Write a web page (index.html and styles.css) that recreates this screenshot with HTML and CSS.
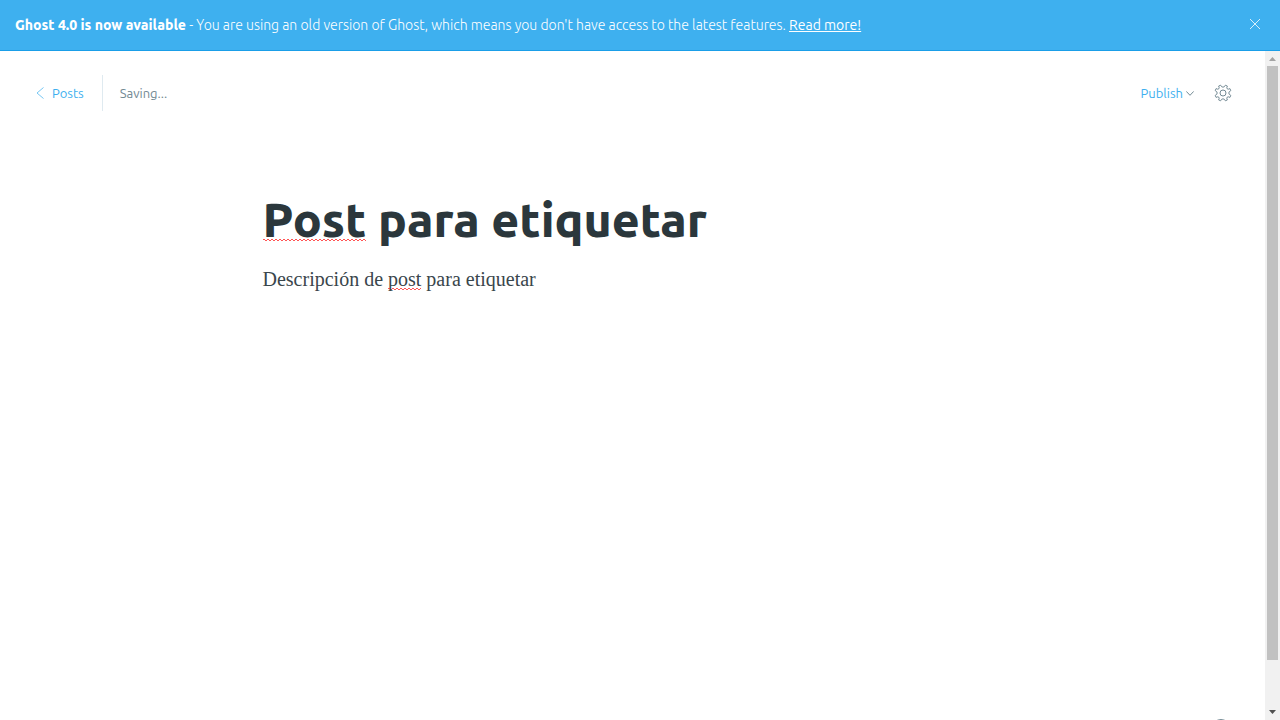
FILE: index.html
```html
<!DOCTYPE html>
<html lang="en">
<head>
<meta charset="utf-8">
<meta name="viewport" content="width=device-width, initial-scale=1">
<title>Post para etiquetar - Ghost</title>
<link rel="stylesheet" href="styles.css">
</head>
<body>
<aside class="alert">
  <div class="alert-text"><b>Ghost 4.0 is now available</b> - You are using an old version of Ghost, which means you don't have access to the latest features. <a href="#">Read more!</a></div>
  <button class="icon-button alert-close" type="button" aria-label="Close">
    <svg width="10" height="10" viewBox="0 0 10 10"><path d="M0 0L10 10M10 0L0 10"/></svg>
  </button>
</aside>
<div class="viewport">
  <main class="editor">
    <header class="editor-header">
      <a class="back" href="#">
        <svg width="8" height="12" viewBox="0 0 8 12"><path d="M7.500 .5L1 6L7.500 11.500"/></svg>
        <span>Posts</span>
      </a>
      <span class="status">Saving...</span>
      <button class="publish" type="button">
        <span>Publish</span>
        <svg width="8" height="5" viewBox="0 0 8 5"><path d="M.3 .4L4 4.300L7.700 .4"/></svg>
      </button>
      <button class="icon-button settings" type="button" aria-label="Settings">
        <svg width="18" height="18" viewBox="0 0 18 18"><circle cx="9" cy="9" r="3"/><path d="M6.600 1.200Q7.500 3.200 9 3.200Q10.500 3.200 11.400 1.200L13.400 2.100Q12.300 3.900 13.200 4.800Q14.100 5.700 15.900 4.600L16.800 6.600Q14.800 7.500 14.800 9Q14.800 10.500 16.800 11.400L15.900 13.400Q14.100 12.300 13.200 13.200Q12.300 14.100 13.400 15.900L11.400 16.800Q10.500 14.800 9 14.800Q7.500 14.800 6.600 16.800L4.600 15.900Q5.700 14.100 4.800 13.200Q3.900 12.300 2.100 13.400L1.200 11.400Q3.200 10.500 3.200 9Q3.200 7.500 1.200 6.600L2.100 4.600Q3.900 5.700 4.800 4.800Q5.700 3.900 4.600 2.100Z"/></svg>
      </button>
    </header>
    <article class="post">
      <h1 class="post-title" contenteditable="true" spellcheck="false"><span class="misspelled">Post</span> para etiquetar</h1>
      <p class="post-body" contenteditable="true" spellcheck="false">Descripción de <span class="misspelled">post</span> para etiquetar</p>
    </article>
    <button class="icon-button help" type="button" aria-label="Help">
      <svg width="18" height="18" viewBox="0 0 18 18"><circle cx="9" cy="9" r="8.500"/></svg>
    </button>
  </main>
  <div class="scrollbar" aria-hidden="true">
    <svg class="arrow-up" width="9" height="4" viewBox="0 0 9 4"><path d="M1 4L4.500 0L8 4Z"/></svg>
    <div class="track"><div class="thumb"></div></div>
    <svg class="arrow-down" width="9" height="4" viewBox="0 0 9 4"><path d="M1 0L4.500 4L8 0Z"/></svg>
  </div>
</div>
</body>
</html>
```
FILE: styles.css
```css
* {
  box-sizing: border-box;
}

body {
  display: flex;
  flex-direction: column;
  height: 100vh;
  margin: 0;
  overflow: hidden;
  background: #fff;
  color: #2b373c;
  font: 13px/20px Ubuntu, "Open Sans", "Noto Sans", sans-serif;
}

svg {
  display: block;
  fill: none;
  stroke: currentColor;
}

button {
  border: 0;
  padding: 0;
  background: none;
  color: inherit;
  font: inherit;
  cursor: pointer;
}

.alert {
  display: flex;
  flex: none;
  align-items: center;
  justify-content: space-between;
  padding: 15px 20px 15px 15px;
  border-bottom: 1px solid #1a9ee8;
  background: #3eb0ef;
  color: #fff;
  font-size: 14px;
  font-weight: 300;
}

.alert b {
  font-weight: 800;
}

.alert a {
  color: inherit;
  font-weight: 400;
  text-underline-offset: 1px;
}

.alert-close {
  padding-bottom: 2px;
}

.alert-close svg {
  opacity: 0.8;
}

.viewport {
  display: flex;
  flex: 1;
  min-height: 0;
}

.editor {
  position: relative;
  flex: 1;
  min-width: 0;
  overflow: hidden;
}

.editor-header {
  display: flex;
  align-items: center;
  padding: 24px 33px 0 36px;
}

.back {
  display: flex;
  align-items: center;
  gap: 8px;
  padding: 8px 18px 8px 0;
  border-right: 1px solid #dfeaf0;
  color: #3eb0ef;
  text-decoration: none;
}

.back svg {
  opacity: 0.7;
}

.status {
  margin-left: 17px;
  color: #738a94;
}

.publish {
  display: flex;
  align-items: center;
  gap: 3px;
  margin-left: auto;
  color: #3eb0ef;
}

.publish svg {
  color: #738a94;
}

.settings {
  margin-left: 20px;
  color: #738a94;
}

.post {
  max-width: 740px;
  margin: 0 auto;
  padding-top: 78px;
}

.post-title {
  margin: 0;
  font-size: 48px;
  font-weight: 800;
  line-height: 60px;
}

.post-body {
  margin: 14px 0 0;
  color: #3a464c;
  font: 20px/32px "Liberation Serif", serif;
}

.misspelled {
  background: url("data:image/svg+xml,%3Csvg xmlns='http://www.w3.org/2000/svg' width='4' height='2'%3E%3Cpath d='M0 0h2v1h2v1h-2v-1h-2z' fill='%23f55'/%3E%3C/svg%3E") left bottom repeat-x;
}

.post-title .misspelled {
  background-position: left bottom 5px;
}

.help {
  position: absolute;
  right: 35px;
  bottom: -17px;
  color: #738a94;
}

.scrollbar {
  display: flex;
  flex-direction: column;
  align-items: center;
  width: 15px;
  padding: 6px 0;
  background: #f1f1f1;
}

.scrollbar svg {
  flex: none;
  stroke: none;
}

.arrow-up {
  fill: #a3a3a3;
}

.arrow-down {
  fill: #505050;
}

.track {
  flex: 1;
  width: 11px;
  margin: 5px 0;
}

.thumb {
  height: 93%;
  background: #c1c1c1;
}
```
